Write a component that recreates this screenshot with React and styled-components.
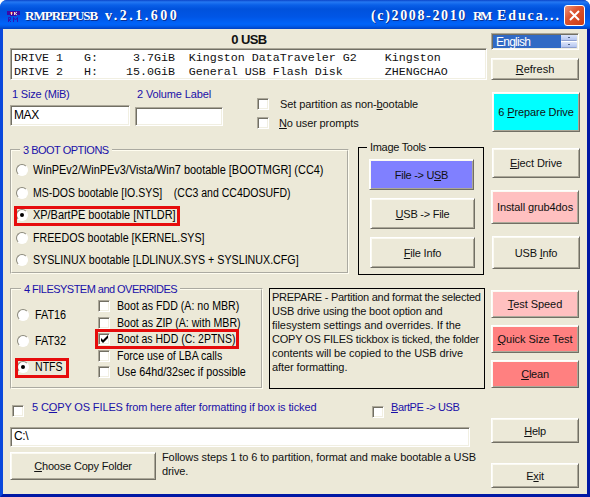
import React from "react";
import styled, { createGlobalStyle, css } from "styled-components";

const Colors = {
  Face: "#ece9d8",
  Shadow: "#716f64",
  MidShadow: "#aca899",
  Label: "#1a10a8",
  Mark: "#e60c0c",
  Text: "#111",
};

const GlobalStyle = createGlobalStyle`
  * {
    box-sizing: border-box;
  }
  body {
    margin: 0;
    background: #fff;
    overflow: hidden;
  }
`;

const sunken = css`
  background: #fff;
  border: 1px solid #fff;
  border-top-color: ${Colors.MidShadow};
  border-left-color: ${Colors.MidShadow};
  box-shadow: inset 1px 1px 0 ${Colors.Shadow}, inset -1px -1px 0 #f1efe2;
`;

const Window = styled.div`
  width: 590px;
  height: 497px;
  display: flex;
  flex-direction: column;
  border-radius: 7px 7px 0 0;
  overflow: hidden;
  background: linear-gradient(to right, #0a48dc 50%, #0018a4 50%);
  color: ${Colors.Text};
  font-family: "Liberation Sans", Arial, sans-serif;
  font-size: 11px;
  white-space: pre;
`;

const TitleBar = styled.div`
  height: 29px;
  flex: none;
  display: flex;
  align-items: center;
  padding: 2px 5px 0 7px;
  background: linear-gradient(
    to bottom,
    #0b45c8 0,
    #2478f2 2px,
    #0a60e8 5px,
    #0052dc 9px,
    #0056e6 17px,
    #0064fa 24px,
    #005cec 26px,
    #0041c2 29px
  );
`;

const TitleWord = styled.span`
  width: ${(p) => p.$w}px;
  color: #fff;
  font-family: "Liberation Serif", "Times New Roman", serif;
  font-weight: bold;
  font-size: ${(p) => p.$size || 14}px;
  line-height: 20px;
  letter-spacing: ${(p) => p.$ls}px;
  text-shadow: 1px 1px 0 #0a2f90;
`;

const TitleGap = styled.span`
  flex: 1;
`;

const CloseButton = styled.div`
  width: 21px;
  height: 21px;
  display: flex;
  align-items: center;
  justify-content: center;
  border: 1px solid #fff;
  border-radius: 3px;
  background: linear-gradient(135deg, #ec9478 0, #dc5431 40%, #cc3c14 100%);
`;

const Client = styled.div`
  height: 468px;
  padding-left: 7px;
  display: flex;
  background: ${Colors.Face};
  border: 3px solid #0018a4;
  border-top: none;
  border-left-color: #0a48dc;
`;

const Main = styled.div`
  width: 481px;
  flex: none;
`;

const Side = styled.div`
  width: 96px;
  display: flex;
  flex-direction: column;
  padding-top: 4px;
`;

const Heading = styled.div`
  height: 19px;
  width: 478px;
  text-align: center;
  line-height: 22px;
  font-size: 13px;
  font-weight: bold;
  letter-spacing: -0.6px;
`;

const DriveList = styled.div`
  ${sunken}
  width: 477px;
  height: 32px;
  padding: 2px 3px;
  font-family: "Liberation Mono", "Courier New", monospace;
  font-size: 11.67px;
  line-height: 14px;
`;

const Text = styled.span`
  display: block;
  line-height: 14px;
  letter-spacing: ${(p) => p.$ls || 0}px;
  color: ${(p) => (p.$label ? Colors.Label : "inherit")};
`;

// narrow system face used by the radio and check captions
const SystemText = styled.span`
  display: block;
  font-size: 12px;
  line-height: 14px;
  color: #000;
  transform: scaleX(${(p) => p.$fit});
  transform-origin: left;
`;

const FieldsRow = styled.div`
  height: 63px;
  display: flex;
  align-items: flex-start;
`;

const Field = styled.div`
  width: ${(p) => p.$w}px;
  margin-right: 5px;
  padding-top: 7px;
`;

const FieldLabel = styled(Text)`
  padding-left: 2px;
`;

const Input = styled.div`
  ${sunken}
  width: ${(p) => p.$w}px;
  height: ${(p) => p.$h}px;
  margin-top: ${(p) => p.$top || 0}px;
  padding-left: 3px;
  color: #000;
  font-size: 12px;
  line-height: ${(p) => p.$h - 3}px;
  letter-spacing: -0.4px;
`;

const Prompts = styled.div`
  display: flex;
  flex-direction: column;
  gap: 7px;
  padding: 18px 0 0 29px;
`;

const Option = styled.div`
  position: relative;
  display: flex;
  align-items: center;
  height: 12px;
  gap: ${(p) => p.$gap || 7}px;
`;

const Mark = styled.i`
  position: absolute;
  left: ${(p) => p.$x}px;
  top: ${(p) => p.$y}px;
  width: ${(p) => p.$w}px;
  height: 20px;
  border: 3px solid ${Colors.Mark};
`;

const CheckBox = styled.span`
  ${sunken}
  width: 12px;
  height: 12px;
  flex: none;
  display: flex;
  align-items: center;
  justify-content: center;
`;

const RadioDot = styled.span`
  width: 12px;
  height: 12px;
  flex: none;
  display: flex;
  align-items: center;
  justify-content: center;
  border-radius: 50%;
  background: #fff;
  border: 1px solid #fff;
  border-top-color: #8a887b;
  border-left-color: #8a887b;
  &::after {
    content: "";
    width: 4px;
    height: 4px;
    border-radius: 50%;
    background: ${(p) => (p.$on ? "#000" : "transparent")};
  }
`;

const Row = styled.div`
  display: flex;
  align-items: flex-start;
`;

const Group = styled.fieldset`
  width: ${(p) => p.$w}px;
  height: ${(p) => p.$h}px;
  min-width: 0;
  margin: ${(p) => p.$top || 0}px 0 0 ${(p) => p.$left || 0}px;
  padding: 0;
  border: ${(p) => (p.$solid ? "1px solid #000" : "2px groove #fffdf0")};
`;

const Legend = styled.legend`
  margin-left: ${(p) => p.$x}px;
  padding: 0 3px;
  line-height: 14px;
  letter-spacing: ${(p) => p.$ls}px;
  color: ${(p) => (p.$label ? Colors.Label : Colors.Text)};
`;

const BootList = styled.div`
  display: flex;
  flex-direction: column;
  gap: 10.5px;
  padding: 7px 0 0 4px;
`;

const ToolList = styled.div`
  display: flex;
  flex-direction: column;
  gap: 8px;
  padding: 5px 0 0 11px;
`;

const FileSystems = styled.div`
  width: 86px;
  display: flex;
  flex-direction: column;
  gap: 14px;
  padding: 13px 0 0 5px;
`;

const Overrides = styled.div`
  display: flex;
  flex-direction: column;
  gap: 4.5px;
  padding-top: 4px;
`;

const Button = styled.div`
  width: ${(p) => p.$w || 88}px;
  height: ${(p) => p.$h}px;
  flex: none;
  margin: ${(p) => p.$top || 0}px 0 0 ${(p) => p.$left || 0}px;
  display: flex;
  align-items: center;
  justify-content: center;
  background: ${(p) => p.$bg || Colors.Face};
  border: 1px solid #fff;
  border-right-color: ${Colors.Shadow};
  border-bottom-color: ${Colors.Shadow};
  box-shadow: inset 1px 1px 0 #fbfaf2, inset -1px -1px 0 ${Colors.MidShadow};
  letter-spacing: ${(p) => p.$ls || 0}px;
`;

const Key = styled.u`
  text-underline-offset: 1px;
  text-decoration-thickness: 1px;
`;

const Help = styled.div`
  width: 216px;
  height: 101px;
  margin: 13px 0 0 6px;
  padding: 1px 2px;
  border: 1px solid #000;
`;

const Language = styled.div`
  ${sunken}
  width: 88px;
  height: 17px;
  flex: none;
  padding: 1px;
  display: flex;
  justify-content: space-between;
`;

const Selected = styled.span`
  width: 68px;
  height: 13px;
  padding-left: 3px;
  background: #316ac5;
  color: #fff;
  font-size: 12px;
  line-height: 15px;
  letter-spacing: -0.75px;
`;

const Spinner = styled.div`
  width: 16px;
  display: flex;
  flex-direction: column;
  gap: 1px;
`;

const SpinButton = styled.span`
  height: 6px;
  display: flex;
  align-items: center;
  justify-content: center;
  border-radius: 1px;
  background: linear-gradient(#dbe4fa, #b5c5ef);
  border-bottom: 1px solid #8e9fce;
  &::after {
    content: "";
    width: 2px;
    height: 1px;
    background: #4d6185;
  }
`;

const CopyRow = styled.div`
  display: flex;
  height: 38px;
  padding: 11px 0 0 2px;
`;

const CopyCheck = styled.div`
  display: flex;
  width: ${(p) => p.$w}px;
  gap: ${(p) => p.$gap}px;
  & > :first-child {
    margin-top: ${(p) => p.$drop}px;
  }
`;

const Footer = styled.div`
  display: flex;
  margin-top: 5px;
  gap: 6px;
`;

const FooterNote = styled(Text)`
  margin-top: -2px;
`;

function Logo() {
  return (
    <svg width="18" height="16" viewBox="0 0 18 16">
      <path d="M0 3h13v4H10v1H3V7H0z" fill="#3d0aa6" />
      <path d="M3 4h3v2H3z" fill="#c03a50" />
      <path d="M4.500 4v3M7.500 4v3M10 4l-2 1.500L10 7" stroke="#f5dcd0" fill="none" />
      <path
        d="M1.500 14V9.500h2v2h-2l2.500 2.500M6.500 14V9.500l2 2.500 2-2.500V14"
        stroke="#2c14b8"
        fill="none"
      />
    </svg>
  );
}

function Tick() {
  return (
    <svg width="9" height="9" viewBox="0 0 9 9">
      <path d="M1 3v3l2 2 5-5V0L3 5z" fill="#000" />
    </svg>
  );
}

function Radio({ label, fit, on, gap, mark }) {
  return (
    <Option $gap={gap}>
      <RadioDot $on={on} />
      <SystemText $fit={fit}>{label}</SystemText>
      {mark && <Mark $x={mark[0]} $y={mark[1]} $w={mark[2]} />}
    </Option>
  );
}

function Check({ label, fit, on, mark }) {
  return (
    <Option>
      <CheckBox>{on && <Tick />}</CheckBox>
      <SystemText $fit={fit}>{label}</SystemText>
      {mark && <Mark $x={mark[0]} $y={mark[1]} $w={mark[2]} />}
    </Option>
  );
}

// "&" in a caption stands before its access key
function Caption({ children }) {
  const [before, after] = children.split("&");
  if (after === undefined) return <span>{before}</span>;
  return (
    <span>
      {before}
      <Key>{after[0]}</Key>
      {after.slice(1)}
    </span>
  );
}

const bootOptions = [
  { label: "WinPEv2/WinPEv3/Vista/Win7 bootable [BOOTMGR] (CC4)", fit: 0.91 },
  { label: "MS-DOS bootable [IO.SYS]    (CC3 and CC4DOSUFD)", fit: 0.876 },
  { label: "XP/BartPE bootable [NTLDR]", fit: 0.91, on: true, mark: [-2, -3, 166] },
  { label: "FREEDOS bootable [KERNEL.SYS]", fit: 0.89 },
  { label: "SYSLINUX bootable [LDLINUX.SYS + SYSLINUX.CFG]", fit: 0.89 },
];

const fileSystems = [
  { label: "FAT16", fit: 0.9 },
  { label: "FAT32", fit: 0.9 },
  { label: "NTFS", fit: 0.88, on: true, mark: [-2, -3, 54] },
];

const overrides = [
  { label: "Boot as FDD (A: no MBR)", fit: 0.886 },
  { label: "Boot as ZIP (A: with MBR)", fit: 0.884 },
  { label: "Boot as HDD (C: 2PTNS)", fit: 0.875, on: true, mark: [-3, -4, 144] },
  { label: "Force use of LBA calls", fit: 0.881 },
  { label: "Use 64hd/32sec if possible", fit: 0.898 },
];

const helpLines = [
  ["PREPARE - Partition and format the selected", -0.26],
  ["USB drive using the boot option and", -0.16],
  ["filesystem settings and overrides. If the", -0.03],
  ["COPY OS FILES tickbox is ticked, the folder", -0.2],
  ["contents will be copied to the USB drive", -0.07],
  ["after formatting.", -0.1],
];

const sideButtons = [
  { text: "&Refresh", h: 22, top: 8 },
  { text: "6 &Prepare Drive", h: 40, top: 12, left: 1, bg: "#00ffff", ls: -0.1 },
  { text: "&Eject Drive", h: 30, top: 16, left: 1, ls: -0.1 },
  { text: "Install &grub4dos", h: 34, top: 12, bg: "#ffc0c0", ls: -0.1 },
  { text: "USB &Info", h: 33, top: 12, left: 1, ls: -0.2 },
  { text: "&Test Speed", h: 28, top: 21, bg: "#ffc0c0", ls: -0.05 },
  { text: "&Quick Size Test", h: 28, top: 7, bg: "#ff8080", ls: -0.05 },
  { text: "&Clean", h: 28, top: 7, bg: "#ff8080", ls: -0.2 },
  { text: "&Help", h: 25, top: 30, ls: -0.25 },
  { text: "E&xit", h: 25, top: 20, ls: -0.2 },
];

export default function App() {
  return (
    <Window>
      <GlobalStyle />
      <TitleBar>
        <Logo />
        <TitleWord $w={80} $ls={-0.95} $size={13}>
          RMPREPUSB
        </TitleWord>
        <TitleWord $w={80} $ls={2.5}>
          v.2.1.600
        </TitleWord>
        <TitleGap />
        <TitleWord $w={102} $ls={1.65}>
          (c)2008-2010
        </TitleWord>
        <TitleWord $w={24} $ls={-2.4} $size={13}>
          RM
        </TitleWord>
        <TitleWord $w={67} $ls={1.9}>
          Educa...
        </TitleWord>
        <CloseButton>
          <svg width="13" height="13" viewBox="0 0 13 13">
            <path d="M2 2l9 9M11 2l-9 9" stroke="#fff" strokeWidth="2" />
          </svg>
        </CloseButton>
      </TitleBar>
      <Client>
        <Main>
          <Heading>0 USB</Heading>
          <DriveList>
            <div>DRIVE 1   G:     3.7GiB  Kingston DataTraveler G2    Kingston</div>
            <div>DRIVE 2   H:    15.0GiB  General USB Flash Disk      ZHENGCHAO</div>
          </DriveList>
          <FieldsRow>
            <Field $w={120}>
              <FieldLabel $label $ls={-0.2}>1 Size (MiB)</FieldLabel>
              <Input $w={120} $h={21} $top={4}>MAX</Input>
            </Field>
            <Field $w={88}>
              <FieldLabel $label $ls={-0.13}>2 Volume Label</FieldLabel>
              <Input $w={88} $h={19} $top={6} />
            </Field>
            <Prompts>
              <Option $gap={11}>
                <CheckBox />
                <Text $ls={-0.09}>
                  <Caption>Set partition as non-&bootable</Caption>
                </Text>
              </Option>
              <Option $gap={10}>
                <CheckBox />
                <Text $ls={-0.12}>
                  <Caption>&No user prompts</Caption>
                </Text>
              </Option>
            </Prompts>
          </FieldsRow>
          <Row>
            <Group $w={339} $h={131}>
              <Legend $label $x={8} $ls={-0.5}>3 BOOT OPTIONS</Legend>
              <BootList>
                {bootOptions.map((o) => (
                  <Radio key={o.label} gap={5} {...o} />
                ))}
              </BootList>
            </Group>
            <Group $solid $w={126} $h={135} $left={9} $top={-3}>
              <Legend $x={8} $ls={-0.3}>Image Tools</Legend>
              <ToolList>
                <Button $w={105} $h={31} $left={-1} $bg="#8080ff" $ls={-0.3}>
                  <Caption>{"File -> U&SB"}</Caption>
                </Button>
                <Button $w={105} $h={31} $ls={-0.25}>
                  <Caption>{"&USB -> File"}</Caption>
                </Button>
                <Button $w={105} $h={31} $ls={-0.2}>
                  <Caption>&File Info</Caption>
                </Button>
              </ToolList>
            </Group>
          </Row>
          <Row>
            <Group $w={253} $h={107} $top={7}>
              <Legend $label $x={9} $ls={-0.53}>4 FILESYSTEM and OVERRIDES</Legend>
              <Row>
                <FileSystems>
                  {fileSystems.map((o) => (
                    <Radio key={o.label} gap={6} {...o} />
                  ))}
                </FileSystems>
                <Overrides>
                  {overrides.map((o) => (
                    <Check key={o.label} {...o} />
                  ))}
                </Overrides>
              </Row>
            </Group>
            <Help>
              {helpLines.map(([line, ls]) => (
                <Text key={line} $ls={ls}>
                  {line}
                </Text>
              ))}
            </Help>
          </Row>
          <CopyRow>
            <CopyCheck $w={360} $gap={8} $drop={5}>
              <CheckBox />
              <Text $label $ls={-0.13}>
                <Caption>5 C&OPY OS FILES from here after formatting if box is ticked</Caption>
              </Text>
            </CopyCheck>
            <CopyCheck $w={100} $gap={7} $drop={6}>
              <CheckBox />
              <Text $label $ls={-0.4}>
                <Caption>{"&BartPE -> USB"}</Caption>
              </Text>
            </CopyCheck>
          </CopyRow>
          <Input $w={460} $h={20}>C:\</Input>
          <Footer>
            <Button $w={146} $h={28} $ls={-0.18}>
              <Caption>&Choose Copy Folder</Caption>
            </Button>
            <FooterNote $ls={-0.1}>
              {"Follows steps 1 to 6 to partition, format and make bootable a USB\ndrive."}
            </FooterNote>
          </Footer>
        </Main>
        <Side>
          <Language>
            <Selected>English</Selected>
            <Spinner>
              <SpinButton />
              <SpinButton />
            </Spinner>
          </Language>
          {sideButtons.map((b) => (
            <Button key={b.text} $h={b.h} $top={b.top} $left={b.left} $bg={b.bg} $ls={b.ls}>
              <Caption>{b.text}</Caption>
            </Button>
          ))}
        </Side>
      </Client>
    </Window>
  );
}
